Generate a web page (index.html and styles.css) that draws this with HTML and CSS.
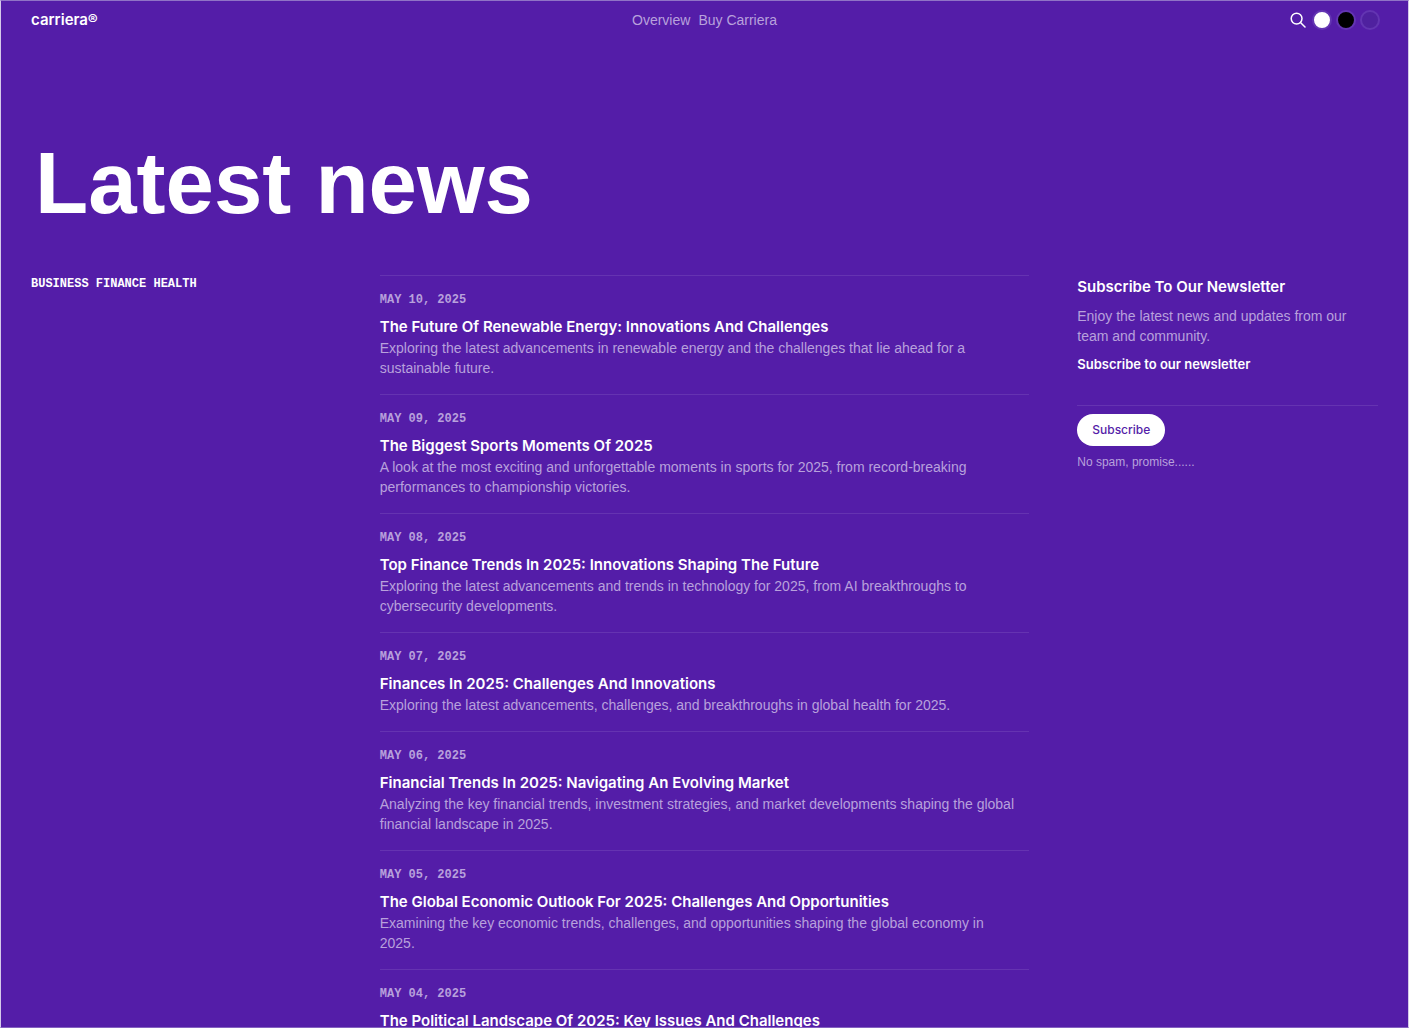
FILE: index.html
```html
<!DOCTYPE html>
<html lang="en">
<head>
<meta charset="utf-8">
<meta name="viewport" content="width=device-width, initial-scale=1">
<title>Latest news – carriera</title>
<link rel="stylesheet" href="styles.css">
</head>
<body>
<div class="page">
  <header class="header">
    <a class="brand" href="#">carriera®</a>
    <nav class="nav">
      <a href="#">Overview</a>
      <a href="#">Buy Carriera</a>
    </nav>
    <div class="tools">
      <button class="search" type="button" aria-label="Search">
        <svg viewBox="0 0 16 16" width="16" height="16" fill="none" stroke="currentColor" stroke-width="1.5" stroke-linecap="round"><circle cx="6.6" cy="6.6" r="5.4"/><path d="M10.5 10.5 15 15"/></svg>
      </button>
      <button class="swatch swatch-light" type="button" aria-label="Light theme"></button>
      <button class="swatch swatch-dark" type="button" aria-label="Dark theme"></button>
      <button class="swatch swatch-accent" type="button" aria-label="Purple theme"></button>
    </div>
  </header>
  <main>
    <h1 class="title">Latest news</h1>
    <div class="columns">
      <nav class="categories" aria-label="Categories">
        <a href="#">BUSINESS</a> <a href="#">FINANCE</a> <a href="#">HEALTH</a>
      </nav>
      <section class="feed">
        <article class="post">
          <time datetime="2025-05-10">MAY 10, 2025</time>
          <h2><a href="#">The Future Of Renewable Energy: Innovations And Challenges</a></h2>
          <p>Exploring the latest advancements in renewable energy and the challenges that lie ahead for a sustainable future.</p>
        </article>
        <article class="post">
          <time datetime="2025-05-09">MAY 09, 2025</time>
          <h2><a href="#">The Biggest Sports Moments Of 2025</a></h2>
          <p>A look at the most exciting and unforgettable moments in sports for 2025, from record-breaking performances to championship victories.</p>
        </article>
        <article class="post">
          <time datetime="2025-05-08">MAY 08, 2025</time>
          <h2><a href="#">Top Finance Trends In 2025: Innovations Shaping The Future</a></h2>
          <p>Exploring the latest advancements and trends in technology for 2025, from AI breakthroughs to cybersecurity developments.</p>
        </article>
        <article class="post">
          <time datetime="2025-05-07">MAY 07, 2025</time>
          <h2><a href="#">Finances In 2025: Challenges And Innovations</a></h2>
          <p>Exploring the latest advancements, challenges, and breakthroughs in global health for 2025.</p>
        </article>
        <article class="post">
          <time datetime="2025-05-06">MAY 06, 2025</time>
          <h2><a href="#">Financial Trends In 2025: Navigating An Evolving Market</a></h2>
          <p>Analyzing the key financial trends, investment strategies, and market developments shaping the global financial landscape in 2025.</p>
        </article>
        <article class="post">
          <time datetime="2025-05-05">MAY 05, 2025</time>
          <h2><a href="#">The Global Economic Outlook For 2025: Challenges And Opportunities</a></h2>
          <p>Examining the key economic trends, challenges, and opportunities shaping the global economy in 2025.</p>
        </article>
        <article class="post">
          <time datetime="2025-05-04">MAY 04, 2025</time>
          <h2><a href="#">The Political Landscape Of 2025: Key Issues And Challenges</a></h2>
        </article>
      </section>
      <aside class="newsletter">
        <h2>Subscribe To Our Newsletter</h2>
        <p class="intro">Enjoy the latest news and updates from our team and community.</p>
        <form>
          <label for="email">Subscribe to our newsletter</label>
          <input id="email" type="email">
          <button class="subscribe" type="button">Subscribe</button>
        </form>
        <p class="note">No spam, promise......</p>
      </aside>
    </div>
  </main>
</div>
</body>
</html>
```
FILE: styles.css
```css
:root {
  --accent: #541da8;
  --muted: #b8a1dc;
  --line: #6533b1;
  --sans: "Liberation Sans", Arial, sans-serif;
  --display: Inter, "Liberation Sans", sans-serif;
  --mono: "Liberation Mono", monospace;
}

* { box-sizing: border-box; }

body {
  margin: 0;
  background: var(--accent);
  color: #fff;
  font: 14px/20px var(--sans);
}

h1, h2, p { margin: 0; }
a { color: inherit; text-decoration: none; }

button {
  padding: 0;
  border: 0;
  background: none;
  color: inherit;
  font: inherit;
}

.page {
  height: 100vh;
  overflow-y: auto;
  scrollbar-width: none;
  padding: 0 30px;
  border: 1px solid #d5c9ea;
  border-top-color: #9073c6;
  border-bottom-color: #8461c0;
}

.header {
  display: grid;
  grid-template-columns: 1fr auto 1fr;
  align-items: center;
  height: 38px;
}

.brand { font: 600 15px/20px var(--display); }

.nav { display: flex; gap: 8px; color: var(--muted); }

.tools {
  display: flex;
  justify-content: flex-end;
  align-items: center;
  gap: 4px;
  margin-right: -2px;
}

.search {
  display: flex;
  margin-right: 2px;
}

.swatch {
  width: 20px;
  height: 20px;
  border: 2px solid #6335b2;
  border-radius: 50%;
}

.swatch-light { background: #fff; }
.swatch-dark { background: #000; }
.swatch-accent { background: #4f219f; }

.title {
  padding: 94px 4px 42px;
  font: bold 87px/100px var(--sans);
}

.columns {
  display: grid;
  grid-template-columns: repeat(4, minmax(0, 1fr));
  gap: 48px;
}

.categories, .newsletter { padding-top: 1px; }

.categories, .post time {
  font: bold 12px/16px var(--mono);
}

.feed { grid-column: span 2; }

.post {
  padding: 16px 0;
  border-top: 1px solid var(--line);
}

.post time {
  display: block;
  margin-bottom: 8px;
  color: var(--muted);
}

.post h2, .newsletter h2 {
  font: 600 15px/22px var(--display);
}

.post p, .intro { color: var(--muted); }

.post p { padding-right: 8px; }

.newsletter h2 { margin-bottom: 8px; }

.newsletter label {
  display: block;
  margin-top: 8px;
  font: 600 13px/20px var(--display);
}

.newsletter input {
  display: block;
  width: 100%;
  height: 32px;
  padding: 0;
  border: 0;
  border-bottom: 1px solid var(--line);
  background: none;
  color: inherit;
  font: inherit;
  outline: 0;
}

.subscribe {
  height: 32px;
  margin: 8px 0;
  padding: 0 15px;
  border-radius: 16px;
  background: #fff;
  color: var(--accent);
  font: 500 12px/16px var(--display);
}

.note {
  color: var(--muted);
  font-size: 12px;
  line-height: 16px;
}
```
